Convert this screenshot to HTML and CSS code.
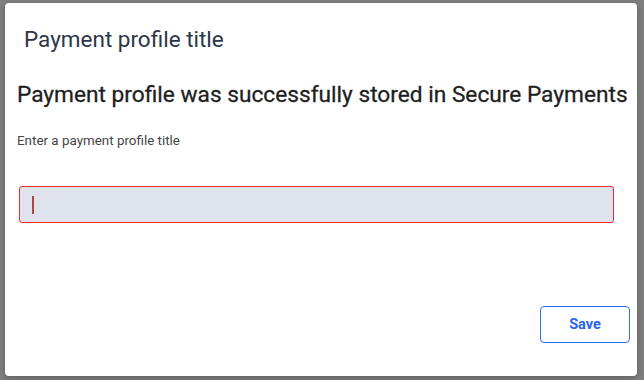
FILE: index.html
```html
<!DOCTYPE html>
<html lang="en">
<head>
    <meta charset="UTF-8">
    <meta name="viewport" content="width=device-width, initial-scale=1.0">
    <title>Payment profile title</title>
    <link rel="stylesheet" href="styles.css">
</head>
<body>
    <div class="backdrop">
        <div class="modal">
            <div class="modal-header">
                <h2>Payment profile title</h2>
            </div>

            <div class="modal-body">
                <h1>Payment profile was successfully stored in Secure Payments</h1>
                <label class="field-label">Enter a payment profile title</label>
                <div class="title-input">
                    <span class="caret"></span>
                </div>
            </div>

            <div class="modal-footer">
                <button class="save-button">Save</button>
            </div>
        </div>
    </div>
</body>
</html>
```

FILE: styles.css
```css
* {
    margin: 0;
    padding: 0;
    box-sizing: border-box;
}

body {
    font-family: Roboto, 'Liberation Sans', sans-serif;
    color: #222;
    background: #7f7f7f;
    width: 644px;
    height: 380px;
    overflow: hidden;
}

.backdrop {
    padding: 3px 7px 4px 5px;
    height: 380px;
}

.modal {
    background: white;
    border-radius: 4px;
    height: 373px;
    box-shadow: 0 2px 6px rgba(0, 0, 0, 0.25);
    display: flex;
    flex-direction: column;
}

.modal-header {
    padding: 22px 19px 0;
}

.modal-header h2 {
    font-size: 22.5px;
    font-weight: 400;
    color: #2d3648;
    line-height: 28px;
}

.modal-body {
    padding: 0 12px;
    flex: 1;
}

.modal-body h1 {
    font-size: 22.7px;
    font-weight: 400;
    color: #1f1f1f;
    line-height: 30px;
    margin-top: 27px;
    white-space: nowrap;
    -webkit-text-stroke: 0.3px #1f1f1f;
}

.field-label {
    display: block;
    font-size: 13.4px;
    color: #444;
    margin-top: 22px;
    line-height: 18px;
}

.title-input {
    margin: 36px 0 0 2px;
    width: 595px;
    height: 37px;
    background: #dfe3eb;
    border: 1px solid #f02a2a;
    border-radius: 3px;
    display: flex;
    align-items: center;
    padding-left: 12px;
}

.caret {
    width: 2px;
    height: 18px;
    background: #b04444;
}

.modal-footer {
    display: flex;
    justify-content: flex-end;
    padding: 0 7px 33px;
}

.save-button {
    width: 90px;
    height: 37px;
    background: white;
    border: 1px solid #2f6ef8;
    border-radius: 4px;
    color: #2862f0;
    font-family: inherit;
    font-size: 14.5px;
    font-weight: 700;
    cursor: pointer;
}
```
